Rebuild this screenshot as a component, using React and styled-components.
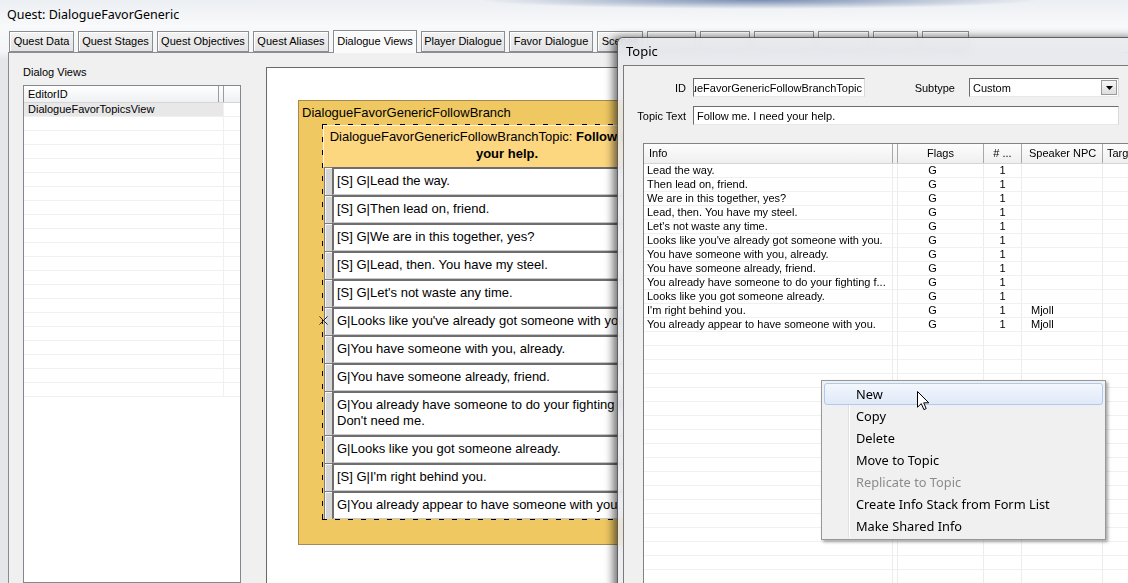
import React from 'react';
import styled, { createGlobalStyle } from 'styled-components';

const GlobalStyle = createGlobalStyle`
  html, body { margin: 0; padding: 0; overflow: hidden; }
  body {
    font-family: "Liberation Sans", Arial, sans-serif;
    font-size: 11px;
    color: #000;
  }
  * { box-sizing: border-box; }
`;

const Desktop = styled.div`
  position: relative;
  width: 1128px;
  height: 583px;
  overflow: hidden;
  background: #e6e8eb;
`;

const QuestWindow = styled.div`
  display: flex;
  flex-direction: column;
  width: 100%;
  height: 100%;
  background:
    radial-gradient(ellipse 280px 9px at 760px 0, rgba(70, 100, 150, 0.7), rgba(70, 100, 150, 0) 100%),
    linear-gradient(#eceff3, #f8f9fa 26px, #f4f5f6 52px, #e4e6e9 60px);
`;

const TitleBar = styled.div`
  height: 29px;
  padding-left: 7px;
  display: flex;
  align-items: center;
  font-family: "Noto Sans", "Open Sans", sans-serif;
  font-size: 12.5px;
`;

const TabStrip = styled.div`
  height: 23px;
  display: flex;
  align-items: flex-end;
  gap: 4px;
  padding-left: 9px;
  position: relative;
  z-index: 1;
`;

const Tab = styled.div`
  width: ${p => p.$w}px;
  height: ${p => (p.$active ? '23px' : '21px')};
  margin-bottom: ${p => (p.$active ? '-1px' : '0')};
  border: 1px solid #8b8d90;
  border-bottom: ${p => (p.$active ? 'none' : '1px solid #8b8d90')};
  background: ${p => (p.$active ? '#fbfbfb' : 'linear-gradient(#f3f3f3, #e2e2e2)')};
  box-shadow: inset 1px 1px 0 #ffffff;
  line-height: ${p => (p.$active ? '20px' : '19px')};
  text-align: center;
  white-space: nowrap;
  overflow: hidden;
`;

const QuestBody = styled.div`
  flex: 1;
  min-height: 0;
  display: flex;
  margin-left: 8px;
  border-top: 1px solid #898c95;
  border-left: 1px solid #898c95;
  background: #f0f0f0;
`;

const ViewsPanel = styled.div`
  width: 232px;
  display: flex;
  flex-direction: column;
  padding: 13px 0 0 14px;
`;

const PanelLabel = styled.div`
  height: 13px;
  line-height: 13px;
  margin-bottom: 6px;
`;

const ListBox = styled.div`
  flex: 1;
  border: 1px solid #828790;
  background: #fff;
  display: flex;
  flex-direction: column;
`;

const ListHeader = styled.div`
  display: flex;
  height: 17px;
  background: linear-gradient(#ffffff, #eef0f2);
  border-bottom: 1px solid #d5d5d5;
`;

const ListHeadCell = styled.div`
  width: ${p => p.$w}px;
  flex: ${p => (p.$w ? 'none' : '1')};
  border-right: ${p => (p.$w ? '1px solid #9c9c9c' : 'none')};
  padding-left: 4px;
  line-height: 16px;
`;

const ListRow = styled.div`
  display: flex;
  height: 14px;
  border-bottom: 1px solid #f0f0f0;
`;

const ListCell = styled.div`
  width: 200px;
  padding-left: 4px;
  line-height: 13px;
  border-right: 1px solid #f0f0f0;
  background: ${p => (p.$selected ? '#e8e8e8' : 'transparent')};
  white-space: nowrap;
`;

const Canvas = styled.div`
  flex: 1;
  margin: 14px 0 0 25px;
  border: 1px solid #6a6a6a;
  border-bottom: none;
  background: #fff;
  position: relative;
  overflow: hidden;
`;

const Node = styled.div`
  position: absolute;
  left: 31px;
  top: 32px;
  width: 420px;
  background: #f0c862;
  border: 1px solid #a48a52;
  padding-bottom: 24px;
  font-size: 13px;
`;

const NodeTitle = styled.div`
  height: 23px;
  line-height: 23px;
  padding-left: 3px;
  white-space: nowrap;
`;

const dash = (dir) =>
  `repeating-linear-gradient(${dir}, #000 0 5px, transparent 5px 13px)`;

const TopicBox = styled.div`
  position: relative;
  width: 370px;
  margin-left: 23px;
  padding: 1px;
  background:
    ${dash('90deg')} top left / 100% 1px no-repeat,
    ${dash('90deg')} bottom left / 100% 1px no-repeat,
    ${dash('180deg')} top left / 1px 100% no-repeat,
    ${dash('180deg')} top right / 1px 100% no-repeat;
`;

const TopicHeader = styled.div`
  background: #fdd680;
  box-shadow: inset 1px 1px 0 #fff4d8;
  padding: 3px 4px 5px;
  line-height: 17px;
  text-align: center;
  white-space: nowrap;
`;

const InfoRow = styled.div`
  display: flex;
  position: relative;
`;

const RowGrip = styled.div`
  width: 8px;
  margin-left: 1px;
  background: #d6d6d6;
  border-left: 1px solid #7c7c7c;
  border-top: 1px solid #7c7c7c;
  box-shadow: inset 1px 1px 0 #f6f6f6;
`;

const RowBox = styled.div`
  flex: 1;
  min-width: 0;
  background: #fff;
  border-top: 2px solid #6e6e6e;
  border-left: 2px solid #6e6e6e;
  border-bottom: 1px solid #c8c8c8;
  border-right: 1px solid #c8c8c8;
  padding: 4px 3px 5px;
  line-height: 16px;
  white-space: nowrap;
  overflow: hidden;
`;

const Marker = styled.svg`
  position: absolute;
  left: -4px;
  top: 9px;
`;

const TopicWindow = styled.div`
  position: absolute;
  left: 617px;
  top: 37px;
  width: 520px;
  height: 560px;
  display: flex;
  flex-direction: column;
  background: rgba(232, 234, 238, 0.84);
  backdrop-filter: blur(5px);
  border: 1px solid rgba(50, 50, 50, 0.75);
  border-radius: 6px 0 0 0;
  box-shadow: -4px 0 9px rgba(0, 0, 0, 0.55);
  z-index: 2;
`;

const TopicTitle = styled.div`
  height: 27px;
  line-height: 27px;
  padding-left: 8px;
  font-family: "Noto Sans", "Open Sans", sans-serif;
  font-size: 13px;
`;

const TopicBody = styled.div`
  flex: 1;
  margin-left: 5px;
  border-top: 1px solid #7a7a7a;
  border-left: 1px solid #7a7a7a;
  background: #f0f0f0;
  display: flex;
  flex-direction: column;
`;

const FormGrid = styled.div`
  display: grid;
  grid-template-columns: 62px 172px 90px 150px;
  grid-auto-rows: 19px;
  column-gap: 7px;
  row-gap: 9px;
  align-items: center;
  padding-top: 12px;
`;

const FieldLabel = styled.div`
  text-align: right;
  padding-right: ${p => p.$pad || 0}px;
  white-space: nowrap;
`;

const TextBox = styled.div`
  grid-column: ${p => p.$span || 'auto'};
  height: 19px;
  border: 1px solid;
  border-color: #6d6d6d #d9d9d9 #e8e8e8 #6d6d6d;
  background: #fff;
  padding: 0 2px 0 3px;
  display: flex;
  align-items: center;
  justify-content: ${p => (p.$end ? 'flex-end' : 'flex-start')};
  overflow: hidden;
  white-space: nowrap;
`;

const SelectBox = styled(TextBox)`
  justify-content: space-between;
  padding-right: 1px;
`;

const DropButton = styled.div`
  width: 16px;
  height: 15px;
  border: 1px solid #9a9a9a;
  background: linear-gradient(#f6f6f6, #dedede);
  display: flex;
  align-items: center;
  justify-content: center;
`;

const InfoList = styled.div`
  flex: 1;
  width: 520px;
  margin: 18px 0 0 19px;
  border: 1px solid #828282;
  border-bottom: none;
  background: #fff;
  overflow: hidden;
`;

const cols = '249px 5px 86px 38px 81px 80px';

const InfoHead = styled.div`
  display: grid;
  grid-template-columns: ${cols};
  height: 20px;
  background: linear-gradient(#fdfdfd, #efefef);
  border-bottom: 1px solid #d5d5d5;
`;

const HeadCell = styled.div`
  border-right: 1px solid #a9a9a9;
  padding: 0 ${p => p.$pad ?? 5}px;
  line-height: 18px;
  text-align: ${p => p.$align || 'left'};
  white-space: nowrap;
  overflow: hidden;
`;

const InfoRowLine = styled.div`
  display: grid;
  grid-template-columns: ${cols};
  height: 14px;
  border-bottom: 1px solid #f0f0f0;
`;

const InfoCell = styled.div`
  border-right: 1px solid #ececec;
  padding: 0 ${p => p.$padR || 0}px 0 ${p => p.$padL || 0}px;
  line-height: 13px;
  text-align: ${p => p.$align || 'left'};
  white-space: nowrap;
  overflow: hidden;
`;

const ContextMenu = styled.div`
  position: absolute;
  left: 821px;
  top: 380px;
  width: 285px;
  padding: 2px;
  border: 1px solid #979797;
  background: #f0f0f0;
  box-shadow: 2px 2px 3px rgba(0, 0, 0, 0.35);
  z-index: 3;
  font-family: "Noto Sans", "Open Sans", sans-serif;
  font-size: 12.8px;
  &::before {
    content: '';
    position: absolute;
    left: 26px;
    top: 2px;
    bottom: 2px;
    width: 1px;
    background: #e0e0e0;
    border-right: 1px solid #fff;
  }
`;

const MenuItem = styled.div`
  position: relative;
  height: 22px;
  line-height: 20px;
  padding-left: 31px;
  border: 1px solid ${p => (p.$hot ? '#aecbef' : 'transparent')};
  border-radius: 3px;
  background: ${p => (p.$hot ? 'linear-gradient(#f3f7fd, #dfe9f8)' : 'transparent')};
  color: ${p => (p.$disabled ? '#8b8b8b' : '#000')};
  white-space: nowrap;
`;

const Cursor = styled.svg`
  position: absolute;
  left: 917px;
  top: 391px;
  z-index: 4;
`;

const tabs = [
  ['Quest Data', 65], ['Quest Stages', 75], ['Quest Objectives', 92], ['Quest Aliases', 76],
  ['Dialogue Views', 84], ['Player Dialogue', 84], ['Favor Dialogue', 84], ['Scenes', 46],
  ['', 49], ['', 50], ['', 60], ['', 51], ['', 45], ['', 47],
];

const nodeRows = [
  ['[S] G|Lead the way.'],
  ['[S] G|Then lead on, friend.'],
  ['[S] G|We are in this together, yes?'],
  ['[S] G|Lead, then. You have my steel.'],
  ["[S] G|Let's not waste any time."],
  ["G|Looks like you've already got someone with you."],
  ['G|You have someone with you, already.'],
  ['G|You have someone already, friend.'],
  ['G|You already have someone to do your fighting for you.', "Don't need me."],
  ['G|Looks like you got someone already.'],
  ["[S] G|I'm right behind you."],
  ['G|You already appear to have someone with you.'],
];

const infos = [
  ['Lead the way.', ''],
  ['Then lead on, friend.', ''],
  ['We are in this together, yes?', ''],
  ['Lead, then. You have my steel.', ''],
  ["Let's not waste any time.", ''],
  ["Looks like you've already got someone with you.", ''],
  ['You have someone with you, already.', ''],
  ['You have someone already, friend.', ''],
  ['You already have someone to do your fighting f...', ''],
  ['Looks like you got someone already.', ''],
  ["I'm right behind you.", 'Mjoll'],
  ['You already appear to have someone with you.', 'Mjoll'],
];

const menu = [
  'New', 'Copy', 'Delete', 'Move to Topic', 'Replicate to Topic',
  'Create Info Stack from Form List', 'Make Shared Info',
];

export default function App() {
  const emptyRows = Array.from({ length: 20 });
  return (
    <Desktop>
      <GlobalStyle />
      <QuestWindow>
        <TitleBar>Quest: DialogueFavorGeneric</TitleBar>
        <TabStrip>
          {tabs.map(([t, w], i) => (
            <Tab key={i} $w={w} $active={t === 'Dialogue Views'}>{t}</Tab>
          ))}
        </TabStrip>
        <QuestBody>
          <ViewsPanel>
            <PanelLabel>Dialog Views</PanelLabel>
            <ListBox>
              <ListHeader>
                <ListHeadCell $w={195}>EditorID</ListHeadCell>
                <ListHeadCell $w={3} />
                <ListHeadCell />
              </ListHeader>
              <ListRow>
                <ListCell $selected>DialogueFavorTopicsView</ListCell>
              </ListRow>
              {emptyRows.map((_, i) => (
                <ListRow key={i}><ListCell /></ListRow>
              ))}
            </ListBox>
          </ViewsPanel>
          <Canvas>
            <Node>
              <NodeTitle>DialogueFavorGenericFollowBranch</NodeTitle>
              <TopicBox>
                <TopicHeader>
                  DialogueFavorGenericFollowBranchTopic: <b>Follow me. I need</b>
                  <br />
                  <b>your help.</b>
                </TopicHeader>
                {nodeRows.map((lines, i) => (
                  <InfoRow key={i}>
                    <RowGrip />
                    <RowBox>
                      {lines.map((l, j) => (
                        <div key={j}>{l}</div>
                      ))}
                    </RowBox>
                    {i === 5 && (
                      <Marker width="9" height="9" viewBox="0 0 9 9">
                        <path d="M0.5 0.5 L8.5 8.5 M8.5 0.5 L0.5 8.5" stroke="#222" strokeWidth="1" />
                      </Marker>
                    )}
                  </InfoRow>
                ))}
              </TopicBox>
            </Node>
          </Canvas>
        </QuestBody>
      </QuestWindow>

      <TopicWindow>
        <TopicTitle>Topic</TopicTitle>
        <TopicBody>
          <FormGrid>
            <FieldLabel>ID</FieldLabel>
            <TextBox $end><span>gueFavorGenericFollowBranchTopic</span></TextBox>
            <FieldLabel $pad={7}>Subtype</FieldLabel>
            <SelectBox>
              <span>Custom</span>
              <DropButton>
                <svg width="7" height="4" viewBox="0 0 7 4">
                  <path d="M0 0 H7 L3.5 4 Z" fill="#000" />
                </svg>
              </DropButton>
            </SelectBox>
            <FieldLabel>Topic Text</FieldLabel>
            <TextBox $span="2 / span 3">Follow me. I need your help.</TextBox>
          </FormGrid>
          <InfoList>
            <InfoHead>
              <HeadCell>Info</HeadCell>
              <HeadCell $pad={0} />
              <HeadCell $align="center">Flags</HeadCell>
              <HeadCell $align="center" $pad={2}># ...</HeadCell>
              <HeadCell $pad={7}>Speaker NPC</HeadCell>
              <HeadCell $pad={4}>Targ</HeadCell>
            </InfoHead>
            {infos.map(([text, npc], i) => (
              <InfoRowLine key={i}>
                <InfoCell $padL={3}>{text}</InfoCell>
                <InfoCell />
                <InfoCell $align="center" $padR={16}>G</InfoCell>
                <InfoCell $align="center">1</InfoCell>
                <InfoCell $padL={9}>{npc}</InfoCell>
                <InfoCell />
              </InfoRowLine>
            ))}
            {Array.from({ length: 20 }).map((_, i) => (
              <InfoRowLine key={'e' + i}>
                <InfoCell /><InfoCell /><InfoCell /><InfoCell /><InfoCell /><InfoCell />
              </InfoRowLine>
            ))}
          </InfoList>
        </TopicBody>
      </TopicWindow>

      <ContextMenu>
        {menu.map((m, i) => (
          <MenuItem key={m} $hot={i === 0} $disabled={m === 'Replicate to Topic'}>{m}</MenuItem>
        ))}
      </ContextMenu>

      <Cursor width="13" height="20" viewBox="0 0 13 20">
        <path
          d="M0.5 0.5 L0.5 16.2 L4.3 12.6 L6.9 18.6 L9.2 17.6 L6.7 11.8 L11.8 11.8 Z"
          fill="#fff"
          stroke="#000"
          strokeWidth="1"
          strokeLinejoin="round"
        />
      </Cursor>
    </Desktop>
  );
}
